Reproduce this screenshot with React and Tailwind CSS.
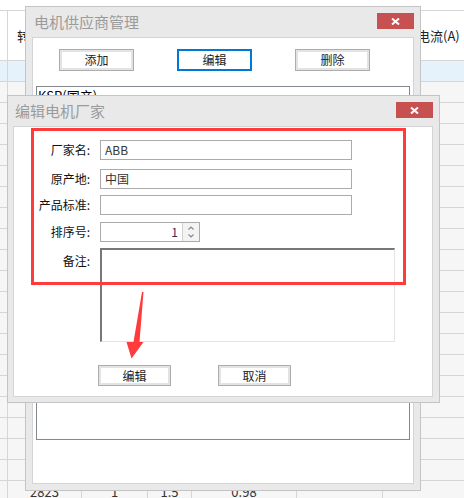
import React from "react";

const COLS = "grid grid-cols-[7px_74px_66px_44px_105px_86px_110px] w-[492px]";

function Row({ bg, cells }) {
  const c = cells || [];
  return (
    <div className={`${COLS} h-[21px] border-b border-[#d6d6d6] ${bg}`}>
      <div />
      {[1, 2, 3, 4, 5, 6].map((i) => (
        <div
          key={i}
          className="border-l border-[#d6d6d6] flex items-center justify-center text-[13px] leading-none text-[#333]"
        >
          {c[i]}
        </div>
      ))}
    </div>
  );
}

function CloseBtn() {
  return (
    <div className="w-[37px] h-[16px] bg-[#c75050] flex items-center justify-center mt-[6px] shrink-0">
      <svg width="9" height="7" viewBox="0 0 9 7">
        <path d="M1 0.5 L8 6.5 M8 0.5 L1 6.5" stroke="white" strokeWidth="2" fill="none" />
      </svg>
    </div>
  );
}

function Btn({ children, variant }) {
  const cls =
    variant === "blue"
      ? "w-[75px] h-[22px] border-2 border-[#0078d7] bg-white flex items-center justify-center text-[12px] leading-none text-[#222]"
      : variant === "small"
      ? "w-[73px] h-[21px] border border-[#adadad] shadow-[inset_0_0_0_2px_#e3e3e3] bg-white flex items-center justify-center text-[12px] leading-none text-[#222]"
      : "w-[75px] h-[22px] border border-[#adadad] shadow-[inset_0_0_0_2px_#e3e3e3] bg-white flex items-center justify-center text-[12px] leading-none text-[#222]";
  return <div className={cls}>{children}</div>;
}

function Label({ children }) {
  return (
    <div className="w-[76px] text-right text-[12px] leading-none text-[#111] whitespace-nowrap">
      {children}
    </div>
  );
}

function Input({ value }) {
  return (
    <div className="ml-[10px] w-[252px] h-[20px] border border-[#ababab] bg-white flex items-center pl-[4px] text-[12px] leading-none text-[#333]">
      {value}
    </div>
  );
}

export default function App() {
  const rows = [];
  for (let i = 0; i < 21; i++) {
    rows.push(
      <Row
        key={i}
        bg={i === 0 ? "bg-[#e5f1fb]" : "bg-[#f6f6f6]"}
        cells={i === 20 ? ["", "2823", "1", "1.5", "0.98", "", ""] : null}
      />
    );
  }

  return (
    <div className="relative w-[464px] h-[498px] overflow-hidden bg-white font-['Noto_Sans_CJK_SC',sans-serif]">
      {/* background table */}
      <div className="pt-[10px]">
        <div className={`${COLS} h-[51px] border-y border-[#d6d6d6] bg-white`}>
          <div />
          <div className="border-l border-[#d6d6d6] flex items-center pl-[9px] text-[13px] leading-none text-[#222] whitespace-nowrap overflow-hidden">
            转速(r/min)
          </div>
          <div className="border-l border-[#d6d6d6]" />
          <div className="border-l border-[#d6d6d6]" />
          <div className="border-l border-[#d6d6d6]" />
          <div className="border-l border-[#d6d6d6]" />
          <div className="border-l border-[#d6d6d6] flex items-center pl-[34px] text-[13px] leading-none text-[#222] whitespace-nowrap">
            电流(A)
          </div>
        </div>
        {rows}
      </div>

      {/* dialog 1 */}
      <div className="absolute left-[25px] top-[6px] w-[396px] h-[485px] border border-[#c4c4c4] bg-[#e9e9e9] px-[6px] pb-[6px] flex flex-col">
        <div className="h-[30px] flex justify-between shrink-0">
          <span className="pl-[2px] text-[15px] leading-[30px] text-[#9b9b9b]">电机供应商管理</span>
          <CloseBtn />
        </div>
        <div className="flex-1 bg-white border border-[#d4d4d4] flex flex-col">
          <div className="flex mt-[11px] ml-[26px] gap-[43px]">
            <Btn>添加</Btn>
            <Btn variant="blue">编辑</Btn>
            <Btn>删除</Btn>
          </div>
          <div className="ml-[3px] mt-[15px] w-[374px] h-[354px] border border-[#828790]">
            <div className="pl-[1px] pt-[2px] text-[13px] leading-[14px] text-black">KSP(国产)</div>
          </div>
        </div>
      </div>

      {/* dialog 2 */}
      <div className="absolute left-[7px] top-[95px] w-[433px] h-[308px] border border-[#c4c4c4] bg-[#e9e9e9] pl-[5px] pr-[6px] pb-[5px] flex flex-col">
        <div className="h-[30px] flex justify-between shrink-0">
          <span className="pl-[2px] text-[15px] leading-[30px] text-[#9b9b9b]">编辑电机厂家</span>
          <CloseBtn />
        </div>
        <div className="flex-1 bg-white border border-[#d4d4d4] flex flex-col">
          <div className="flex items-center mt-[13px]">
            <Label>厂家名:</Label>
            <Input value="ABB" />
          </div>
          <div className="flex items-center mt-[9px]">
            <Label>原产地:</Label>
            <Input value="中国" />
          </div>
          <div className="flex items-center mt-[6px]">
            <Label>产品标准:</Label>
            <Input value="" />
          </div>
          <div className="flex items-center mt-[7px]">
            <Label>排序号:</Label>
            <div className="ml-[10px] w-[100px] h-[20px] border border-[#ababab] bg-white flex">
              <div className="flex-1 flex items-center justify-end pr-[4px] text-[12px] leading-none text-[#3a2a5a]">
                1
              </div>
              <div className="w-[17px] border-l border-[#d0d0d0] bg-[#f3f3f3] flex flex-col items-center justify-center gap-[4px]">
                <svg width="6" height="4" viewBox="0 0 6 4">
                  <path d="M0.5 3.5 L3 1 L5.5 3.5" stroke="#8a8a8a" strokeWidth="1.2" fill="none" />
                </svg>
                <svg width="6" height="4" viewBox="0 0 6 4">
                  <path d="M0.5 0.5 L3 3 L5.5 0.5" stroke="#8a8a8a" strokeWidth="1.2" fill="none" />
                </svg>
              </div>
            </div>
          </div>
          <div className="flex items-start mt-[6px]">
            <div className="mt-[7px]">
              <Label>备注:</Label>
            </div>
            <div className="ml-[10px] w-[295px] h-[94px] bg-white border-t-2 border-l-2 border-r border-b border-t-[#777] border-l-[#777] border-r-[#e3e3e3] border-b-[#e3e3e3]" />
          </div>
          <div className="flex mt-[23px] ml-[84px] gap-[47px]">
            <Btn variant="small">编辑</Btn>
            <Btn variant="small">取消</Btn>
          </div>
        </div>
      </div>

      {/* annotation: red rectangle */}
      <div className="absolute left-[31px] top-[128px] w-[375px] h-[157px] border-[3px] border-[#ff3b3b]" />

      {/* annotation: red arrow */}
      <svg className="absolute left-[124px] top-[290px]" width="22" height="72" viewBox="0 0 22 72">
        <polygon
          points="18,2 19.5,2 15.5,52 19.5,52 7.5,68.5 2.5,52 9.5,52"
          fill="#ff3b3b"
        />
      </svg>
    </div>
  );
}
